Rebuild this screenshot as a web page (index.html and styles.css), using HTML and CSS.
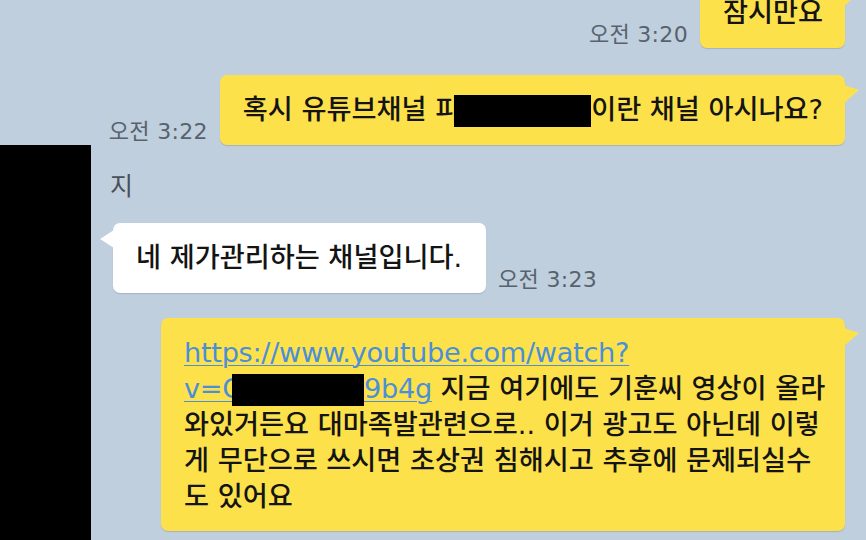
FILE: index.html
```html
<!DOCTYPE html>
<html lang="ko">
<head>
    <meta charset="UTF-8" />
    <meta name="viewport" content="width=device-width, initial-scale=1.0" />
    <title>채팅</title>
    <link rel="stylesheet" href="styles.css">
</head>
<body>
    <div class="chat">
        <div class="row row-top">
            <span class="time">오전 3:20</span>
            <div class="bubble mine">잠시만요</div>
        </div>

        <div class="row row-second">
            <span class="time">오전 3:22</span>
            <div class="bubble mine">혹시 유튜브채널 피<span class="redact redact-name"></span>이란 채널 아시나요?</div>
        </div>

        <div class="thread">
            <div class="avatar"></div>
            <div class="thread-body">
                <div class="sender">지</div>
                <div class="row row-theirs">
                    <div class="bubble theirs">네 제가관리하는 채널입니다.</div>
                    <span class="time">오전 3:23</span>
                </div>
                <div class="row row-long">
                    <div class="bubble mine long">
                        <a class="link" href="#">https://www.youtube.com/watch?</a><br>
                        <a class="link" href="#">v=C<span class="redact redact-link"></span>9b4g</a> 지금 여기에도 기훈씨 영상이 올라<br>
                        와있거든요 대마족발관련으로.. 이거 광고도 아닌데 이렇<br>
                        게 무단으로 쓰시면 초상권 침해시고 추후에 문제되실수<br>
                        도 있어요
                    </div>
                </div>
            </div>
        </div>
    </div>
</body>
</html>
```

FILE: styles.css
```css
body {
    margin: 0;
    height: 540px;
    overflow: hidden;
    background: #bfcfdd;
    font-family: "DejaVu Sans", "Noto Sans CJK KR", sans-serif;
    color: #141414;
}

.chat {
    display: flex;
    flex-direction: column;
    height: 100%;
}

.row {
    display: flex;
    justify-content: flex-end;
    align-items: flex-end;
    gap: 12px;
    padding-right: 21px;
}

.row-top {
    margin-top: -22px;
}

.row-second {
    margin-top: 27px;
}

.time {
    font-size: 22px;
    letter-spacing: 0.3px;
    line-height: 26px;
    color: #58626d;
    white-space: nowrap;
}

.bubble {
    position: relative;
    font-size: 27.2px;
    font-weight: 500;
    line-height: 36px;
    padding: 17px 22px 17px 23px;
    border-radius: 7px;
    white-space: nowrap;
    box-shadow: 0 1px 1px rgba(0, 0, 0, 0.14);
}

.bubble.mine {
    background: #fde14b;
}

.bubble.mine::after {
    content: "";
    position: absolute;
    top: 10px;
    right: -14px;
    width: 15px;
    height: 18px;
    background: #fde14b;
    clip-path: polygon(0 0, 100% 28%, 0 100%);
}

.bubble.theirs {
    background: #ffffff;
    padding-right: 24px;
}

.bubble.theirs::after {
    content: "";
    position: absolute;
    top: 7px;
    left: -13px;
    width: 14px;
    height: 18px;
    background: #ffffff;
    clip-path: polygon(100% 0, 0 50%, 100% 100%);
}

.redact {
    display: inline-block;
    width: 137px;
    height: 32px;
    background: #000;
    vertical-align: -8px;
}

.redact-name {
    margin-left: -6px;
}

.redact-link {
    width: 132px;
    margin-left: -9px;
}

.thread {
    display: flex;
    flex: 1;
    min-height: 0;
}

.avatar {
    flex: 0 0 91px;
    background: #000;
}

.thread-body {
    flex: 1;
    display: flex;
    flex-direction: column;
}

.sender {
    margin-top: 27px;
    padding-left: 19px;
    font-size: 25px;
    line-height: 30px;
    color: #4b5058;
}

.row-theirs {
    justify-content: flex-start;
    padding-left: 22px;
    margin-top: 21px;
}

.row-long {
    margin-top: 25px;
}

.bubble.long {
    width: 684px;
    box-sizing: border-box;
    padding: 17px 23px 16px 23px;
}

.link {
    color: #4a8fd8;
    text-decoration: underline;
    text-decoration-thickness: 1px;
    text-underline-offset: 3px;
    letter-spacing: -0.3px;
}
```
